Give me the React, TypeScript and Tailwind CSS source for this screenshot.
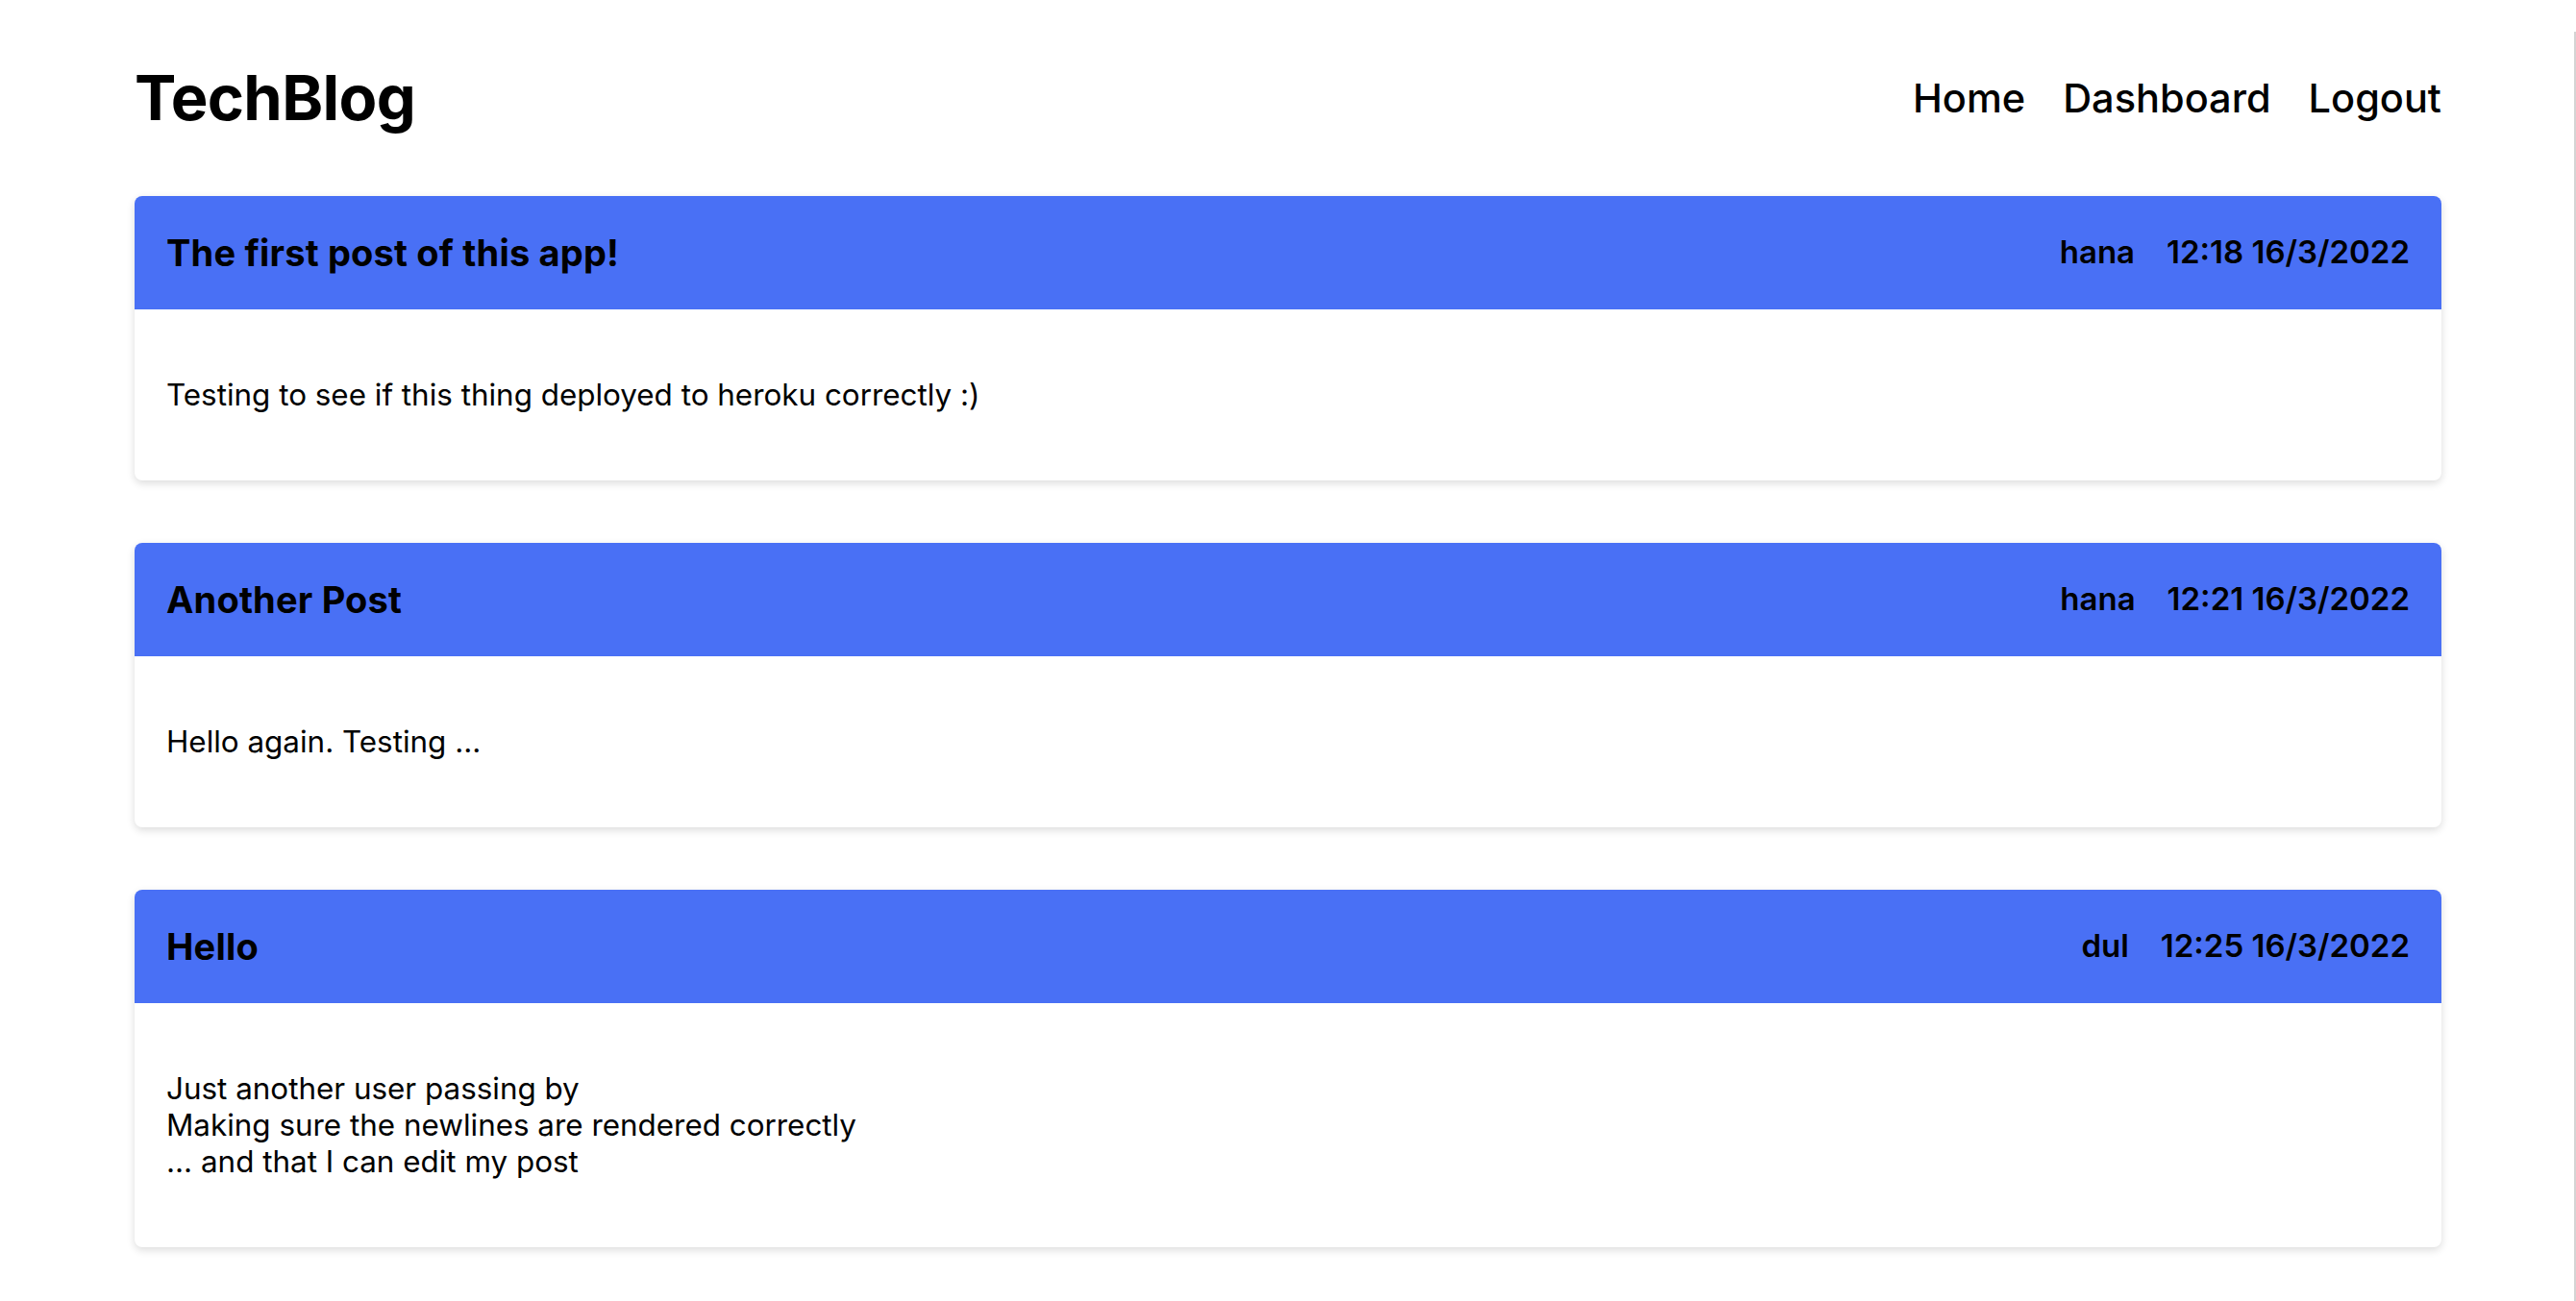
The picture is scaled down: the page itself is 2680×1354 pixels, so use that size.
import React from 'react';

type Post = {
  title: string;
  author: string;
  time: string;
  body: string[];
};

const POSTS: Post[] = [
  {
    title: 'The first post of this app!',
    author: 'hana',
    time: '12:18 16/3/2022',
    body: ['Testing to see if this thing deployed to heroku correctly :)'],
  },
  {
    title: 'Another Post',
    author: 'hana',
    time: '12:21 16/3/2022',
    body: ['Hello again. Testing ...'],
  },
  {
    title: 'Hello',
    author: 'dul',
    time: '12:25 16/3/2022',
    body: [
      'Just another user passing by',
      'Making sure the newlines are rendered correctly',
      '... and that I can edit my post',
    ],
  },
];

function PostCard({ post }: { post: Post }) {
  return (
    <article className="mb-[65px] rounded-[8px] bg-white shadow-[0_3px_8px_rgba(0,0,0,0.14)] overflow-hidden">
      {/* Header */}
      <div className="flex h-[118px] items-center justify-between bg-[#4970f5] px-[33px]">
        <h2 className="text-[38px] font-bold tracking-[0.005em]">{post.title}</h2>
        <div className="flex items-center gap-[33px] text-[33px] font-semibold">
          <span>{post.author}</span>
          <span>{post.time}</span>
        </div>
      </div>

      {/* Body */}
      <div className="px-[33px] py-[70px] text-[31.4px] leading-[38px]">
        {post.body.map((line, i) => (
          <p key={i}>{line}</p>
        ))}
      </div>
    </article>
  );
}

export default function App() {
  return (
    <div className="relative min-h-[1354px] bg-white text-black font-['Inter','Noto_Sans',sans-serif]">
      <div className="px-[140px]">
        {/* Top bar */}
        <header className="flex h-[204px] items-center justify-between">
          <h1 className="text-[65px] font-bold tracking-[-0.01em]">TechBlog</h1>
          <nav className="flex items-center gap-[39px] text-[41.5px] font-medium">
            <a href="#">Home</a>
            <a href="#">Dashboard</a>
            <a href="#">Logout</a>
          </nav>
        </header>

        <main>
          {POSTS.map((post) => (
            <PostCard key={post.title} post={post} />
          ))}
        </main>
      </div>

      {/* scrollbar edge */}
      <div className="absolute right-0 top-[33px] bottom-0 w-[2px] bg-[#d4d4d4]" />
    </div>
  );
}
